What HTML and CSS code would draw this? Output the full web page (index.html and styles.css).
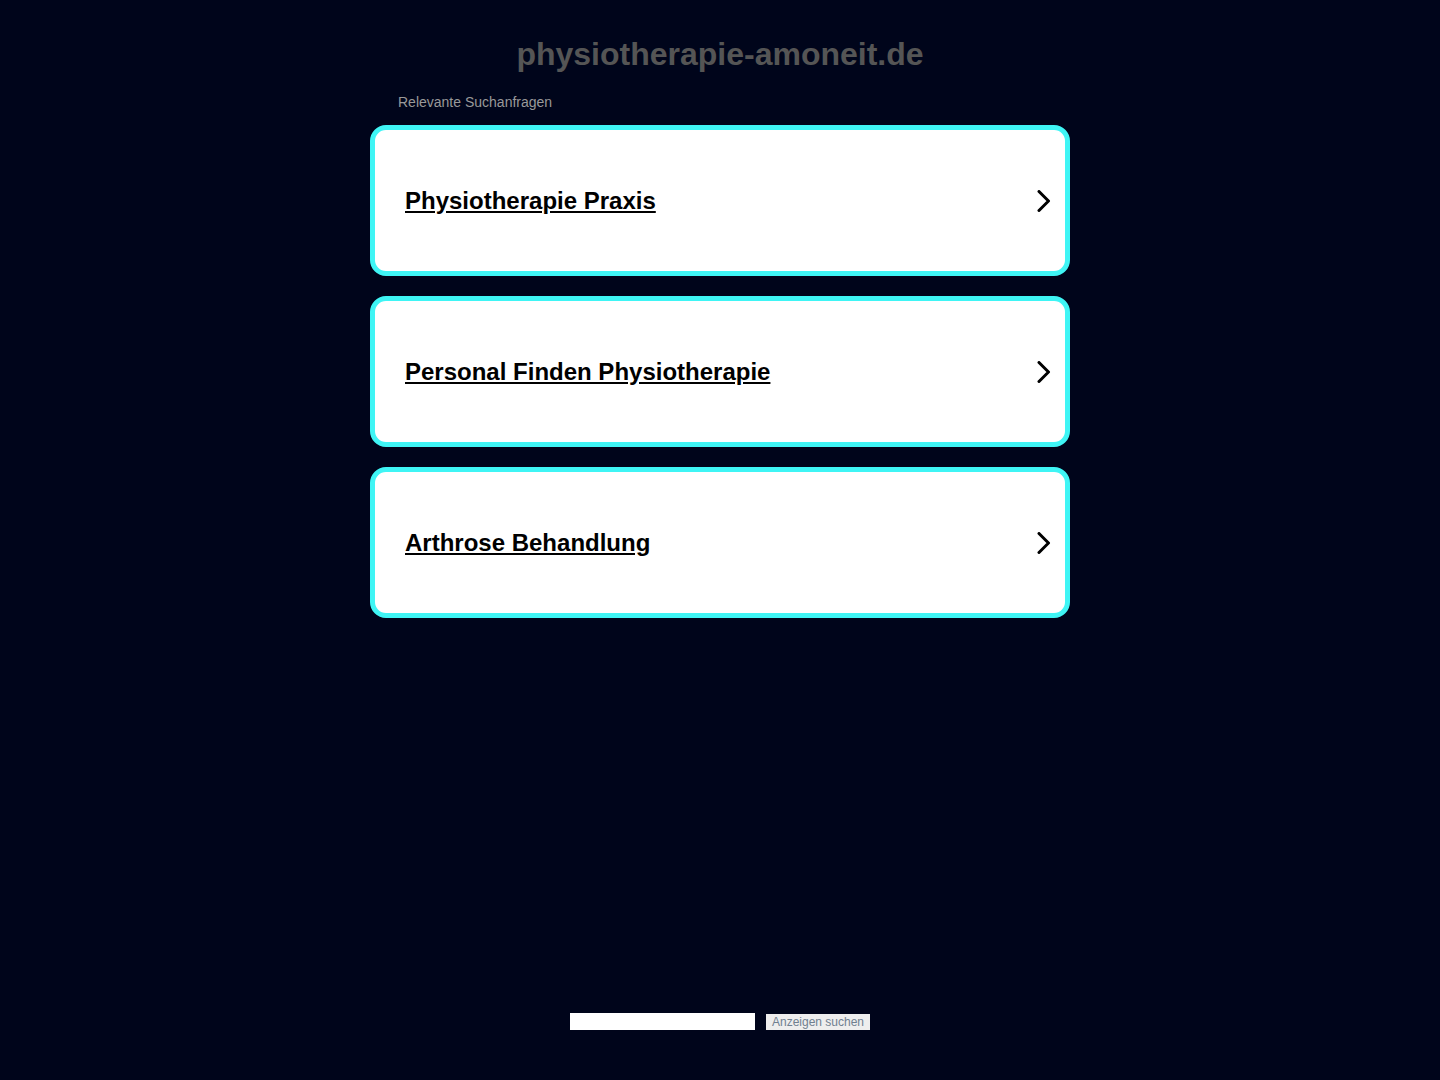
FILE: index.html
```html
<!DOCTYPE html>
<html lang="de">
<head>
<meta charset="utf-8">
<title>physiotherapie-amoneit.de</title>
<link rel="stylesheet" href="styles.css">
</head>
<body>
<div class="page">
  <h1 class="domain">physiotherapie-amoneit.de</h1>
  <div class="main">
    <div class="related">Relevante Suchanfragen</div>
    <ul class="list">
      <li class="card"><a href="#" class="link">Physiotherapie Praxis</a><svg class="chev" viewBox="0 0 16 22" width="16" height="22"><path d="M4 1.5 L13.5 11 L4 20.5" fill="none" stroke="#000" stroke-width="3" stroke-linecap="round" stroke-linejoin="round"/></svg></li>
      <li class="card"><a href="#" class="link">Personal Finden Physiotherapie</a><svg class="chev" viewBox="0 0 16 22" width="16" height="22"><path d="M4 1.5 L13.5 11 L4 20.5" fill="none" stroke="#000" stroke-width="3" stroke-linecap="round" stroke-linejoin="round"/></svg></li>
      <li class="card"><a href="#" class="link">Arthrose Behandlung</a><svg class="chev" viewBox="0 0 16 22" width="16" height="22"><path d="M4 1.5 L13.5 11 L4 20.5" fill="none" stroke="#000" stroke-width="3" stroke-linecap="round" stroke-linejoin="round"/></svg></li>
    </ul>
  </div>
  <div class="spacer"></div>
  <form class="search">
    <input class="search-input" type="text">
    <button class="search-btn" type="button">Anzeigen suchen</button>
  </form>
</div>
</body>
</html>
```

FILE: styles.css
```css
html, body {
  margin: 0;
  padding: 0;
  background: #00051b;
  font-family: "Liberation Sans", Arial, sans-serif;
}
.page {
  height: 1080px;
  display: flex;
  flex-direction: column;
  align-items: center;
}
.domain {
  margin: 34px 0 0 0;
  height: 40px;
  line-height: 40px;
  font-size: 32px;
  font-weight: bold;
  color: #555555;
  text-align: center;
}
.main {
  width: 700px;
  margin-top: 19px;
}
.related {
  font-size: 14px;
  color: #999999;
  padding-left: 28px;
  line-height: 18px;
}
.list {
  list-style: none;
  margin: 14px 0 0 0;
  padding: 0;
  display: flex;
  flex-direction: column;
  gap: 20px;
}
.card {
  box-sizing: border-box;
  height: 151px;
  border: 5px solid #3ff5f5;
  border-radius: 16px;
  background: #ffffff;
  display: flex;
  align-items: center;
  justify-content: space-between;
  padding: 0 14px 0 30px;
}
.link {
  font-size: 24px;
  font-weight: bold;
  color: #000000;
  text-decoration: underline;
  line-height: 28px;
}
.chev {
  display: block;
}
.spacer {
  flex: 1;
}
.search {
  display: flex;
  gap: 11px;
  margin: 0 0 50px 0;
  align-items: center;
}
.search-input {
  box-sizing: border-box;
  width: 185px;
  height: 17px;
  border: none;
  background: #ffffff;
  padding: 0;
  margin: 0;
}
.search-btn {
  box-sizing: border-box;
  width: 104px;
  height: 16px;
  border: none;
  background: #eeeeee;
  color: #708090;
  font-family: "Liberation Sans", Arial, sans-serif;
  font-size: 12px;
  line-height: 16px;
  padding: 0;
  margin: 0;
}
```
